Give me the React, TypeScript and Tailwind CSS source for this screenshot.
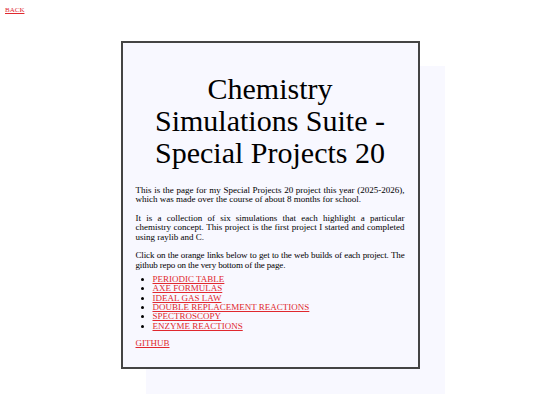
export default function App() {
  const projects = [
    'PERIODIC TABLE',
    'AXE FORMULAS',
    'IDEAL GAS LAW',
    'DOUBLE REPLACEMENT REACTIONS',
    'SPECTROSCOPY',
    'ENZYME REACTIONS',
  ]

  return (
    <div className="min-h-[405px] bg-white font-['Liberation_Serif',serif] text-black">
      <div className="px-[5px] pt-[6px] text-[7px] leading-[8px]">
        <a href="#" className="text-[#e0282e] underline">BACK</a>
      </div>

      {/* Main card */}
      <div className="flex justify-center pt-[27px]">
        <div className="w-[299px] h-[328px] border-2 border-[#444] bg-[#f8f8ff] shadow-[25px_25px_0_#f8f8ff] px-[13px]">
          <h1 className="mt-[30px] text-center text-[30px] leading-[32px] font-normal">
            Chemistry Simulations Suite - Special Projects 20
          </h1>

          <div className="mt-[17px] text-[9px] leading-[9.3px] text-justify">
            <p>
              This is the page for my Special Projects 20 project this year (2025-2026), which was made over the course of about 8 months for school.
            </p>
            <p className="mt-[9.5px]">
              It is a collection of six simulations that each highlight a particular chemistry concept. This project is the first project I started and completed using raylib and C.
            </p>
            <p className="mt-[9.5px] tracking-[-0.15px]">
              Click on the orange links below to get to the web builds of each project. The github repo on the very bottom of the page.
            </p>
            <ul className="mt-[5px] list-disc pl-[17px]">
              {projects.map((p) => (
                <li key={p}>
                  <a href="#" className="text-[#e0282e] underline">{p}</a>
                </li>
              ))}
            </ul>
            <p className="mt-[8px]">
              <a href="#" className="text-[#e0282e] underline">GITHUB</a>
            </p>
          </div>
        </div>
      </div>
    </div>
  )
}
